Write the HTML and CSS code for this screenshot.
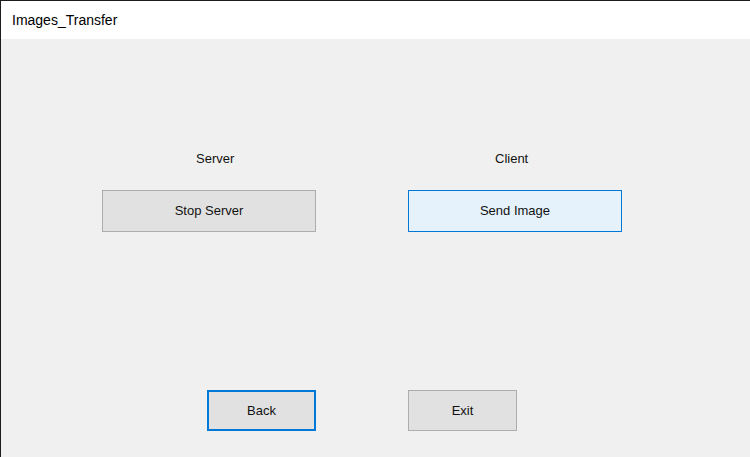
FILE: index.html
```html
<!DOCTYPE html>
<html>
<head>
<meta charset="utf-8">
<title>Images_Transfer</title>
<link rel="stylesheet" href="styles.css">
</head>
<body>
<div class="window">
  <div class="titlebar">Images_Transfer</div>
  <div class="client">
    <div class="grid top">
      <div class="label label-server">Server</div>
      <div class="label label-client">Client</div>
      <button class="btn wide">Stop Server</button>
      <button class="btn wide hover">Send Image</button>
    </div>
    <div class="grid bottom">
      <button class="btn small focused back">Back</button>
      <button class="btn small">Exit</button>
    </div>
  </div>
</div>
</body>
</html>
```
FILE: styles.css
```css
* { box-sizing: border-box; }
html, body { margin: 0; padding: 0; }
body {
  width: 750px;
  height: 457px;
  overflow: hidden;
  font-family: "Liberation Sans", Arial, sans-serif;
  color: #000;
  background: #f0f0f0;
}
.window {
  width: 750px;
  height: 457px;
  border-left: 1px solid #1c1c1c;
  border-top: 1px solid #1c1c1c;
  display: flex;
  flex-direction: column;
}
.titlebar {
  height: 38px;
  flex: none;
  background: #ffffff;
  display: flex;
  align-items: center;
  padding-left: 11px;
  padding-bottom: 1px;
  font-size: 14px;
  color: #000;
}
.client {
  flex: 1;
  background: #f0f0f0;
  padding-left: 101px;
  padding-top: 112px;
}
.grid {
  display: grid;
  grid-template-columns: 214px 214px;
  column-gap: 92px;
}
.label {
  font-size: 13px;
  line-height: 16px;
  height: 16px;
  margin-bottom: 23px;
  color: #111;
}
.label-server { padding-left: 94px; }
.label-client { padding-left: 87px; }
.btn {
  font-family: "Liberation Sans", Arial, sans-serif;
  font-size: 13px;
  color: #111;
  background: #e1e1e1;
  border: 1px solid #adadad;
  border-radius: 0;
  padding: 0 0 1px 0;
  margin: 0;
}
.wide {
  width: 214px;
  height: 42px;
}
.hover {
  background: #e5f1fb;
  border-color: #0078d7;
}
.bottom {
  margin-top: 158px;
}
.small {
  width: 109px;
  height: 41px;
}
.back {
  margin-left: 105px;
}
.focused {
  border: 2px solid #0078d7;
}
```
